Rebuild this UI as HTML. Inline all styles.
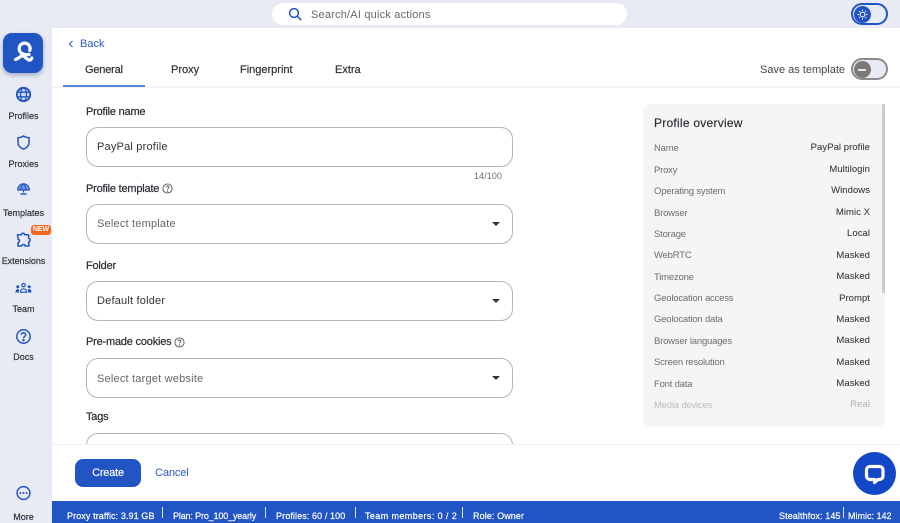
<!DOCTYPE html>
<html><head><meta charset="utf-8">
<style>
html,body{margin:0;padding:0;width:900px;height:523px;overflow:hidden;background:#fff}
body{position:relative;font-family:"Liberation Sans",sans-serif;color:#2b2b33}
.a{position:absolute}
.t{position:absolute;white-space:nowrap;line-height:14px}
.nav{position:absolute;left:0;width:47px;text-align:center;font-size:9px;line-height:12px;color:#33333b;-webkit-text-stroke:.2px #33333b}
.lab{position:absolute;left:86px;font-size:11px;line-height:14px;color:#2b2b33;white-space:nowrap;letter-spacing:-.2px;-webkit-text-stroke:.2px #2b2b33}
.inp{position:absolute;left:86px;width:425px;height:38px;border:1px solid #b5b5b9;border-radius:12px;background:#fff}
.val{position:absolute;left:97px;font-size:11px;line-height:14px;letter-spacing:.2px;white-space:nowrap}
.car{position:absolute;left:492px;width:0;height:0;border-left:4px solid transparent;border-right:4px solid transparent;border-top:4px solid #33333b}
.k{position:absolute;left:654px;font-size:9.5px;line-height:12px;color:#6d6d73;white-space:nowrap;letter-spacing:-.2px;margin-top:1px}
.v{position:absolute;right:30px;font-size:9.5px;line-height:12px;color:#3c3c44;white-space:nowrap;letter-spacing:.05px;-webkit-text-stroke:.1px #3c3c44;margin-top:1px}
.tab{position:absolute;top:63px;font-size:11px;line-height:14px;color:#2f2f37;white-space:nowrap;-webkit-text-stroke:.2px #2f2f37}
.f{position:absolute;top:510px;font-size:9px;line-height:12px;color:#fff;white-space:nowrap;letter-spacing:.1px;-webkit-text-stroke:.2px #fff}
.sep{position:absolute;top:507px;width:1px;height:11px;background:#dfe6f7}
svg{position:absolute;overflow:visible}
</style></head><body>
<div class="a" style="left:0;top:0;width:900px;height:28px;background:#e8ebf4"></div>
<div class="a" style="left:0;top:0;width:52px;height:523px;background:#e8ebf4"></div>

<!-- search -->
<div class="a" style="left:272px;top:3px;width:355px;height:22px;border-radius:11px;background:#fff"></div>
<svg style="left:288px;top:7px" width="15" height="15" viewBox="0 0 15 15" fill="none" stroke="#2255c4" stroke-width="1.5"><circle cx="6" cy="6" r="4.4"/><path d="M9.2 9.2L13.2 13.2"/></svg>
<div class="t" style="left:311px;top:8px;font-size:11px;color:#66666c;letter-spacing:.2px">Search/AI quick actions</div>

<!-- theme toggle -->
<div class="a" style="left:851px;top:3px;width:32.500px;height:18px;border:2px solid #2255c4;border-radius:12px;background:#e8ebf4"></div>
<div class="a" style="left:853.500px;top:5.500px;width:17px;height:17px;border-radius:50%;background:#2255c4"></div>
<svg style="left:853.500px;top:5.500px" width="17" height="17" viewBox="0 0 17 17" fill="none" stroke="#fff" stroke-width="1"><circle cx="8.500" cy="8.500" r="2.400"/><path d="M8.500 3.500v1.400M8.500 12.100v1.400M3.500 8.500h1.400M12.100 8.500h1.400M5 5l.9.9M11.100 11.100l.9.9M12 5l-.9.9M5.900 11.100l-.9.9"/></svg>

<!-- logo -->
<div class="a" style="left:3px;top:33px;width:40px;height:40px;border-radius:9px;background:#2255c4;box-shadow:0 2px 5px rgba(30,50,110,.35)"></div>
<svg style="left:3px;top:33px" width="40" height="40" viewBox="0 0 40 40" fill="none" stroke="#fff" stroke-width="3.200" stroke-linecap="round" stroke-linejoin="round"><path d="M26 21.500c-2 .3-5 0-6.500-.8a5.500 5.500 0 1 1 7.300-3.200"/><path d="M12.500 26.500c2.800-1 4.800-2.800 7-4.300 2.200 1.500 4.200 3.800 6.500 4.800 1.300.5 2.300-.4 2.800-2"/></svg>

<!-- nav icons -->
<svg style="left:16px;top:87px" width="15" height="15" viewBox="0 0 15 15" fill="none" stroke="#2255c4" stroke-width="1.300"><circle cx="7.500" cy="7.500" r="6.700" fill="#cfdaf3" stroke-width="1.800"/><ellipse cx="7.500" cy="7.500" rx="3" ry="6.700"/><path d="M1.200 5.200h12.600M1.200 9.800h12.600"/></svg>
<div class="nav" style="top:110px">Profiles</div>
<svg style="left:17px;top:135px" width="13" height="15" viewBox="0 0 13 15" fill="none" stroke="#2255c4" stroke-width="1.500"><path d="M6.500 1C5 2.100 3 2.600 1 2.700V7.500c0 3 2.200 5.300 5.500 6.700C9.800 12.800 12 10.500 12 7.500V2.700C10 2.600 8 2.100 6.500 1z"/></svg>
<div class="nav" style="top:158px">Proxies</div>
<svg style="left:17px;top:183px" width="13" height="12" viewBox="0 0 13 12" fill="none" stroke="#2255c4" stroke-width="1.200"><path d="M.7 7C.7 3.500 3.200.8 6.500.8s5.800 2.700 5.800 6.200z" fill="#7f9be0"/><path d="M6.500.8c-1.500 1.300-2.300 3.500-2.300 6.200M6.500.8c1.500 1.300 2.300 3.500 2.300 6.200M6.500 7v2.500"/><path d="M3.500 11h6" stroke-width="1.500"/></svg>
<div class="nav" style="top:207px">Templates</div>
<svg style="left:16px;top:232px" width="15" height="15" viewBox="0 0 15 15" fill="none" stroke="#2255c4" stroke-width="1.500" stroke-linejoin="round"><path d="M5.500 2.800C5.500 .8 8.500.6 8.800 2.800H12.600V6.300c1.900.2 1.900 3.400 0 3.600L13 14H9.200c-.3-2-3.200-2-3.500 0H2V10.700c1.900-.3 1.900-3.300 0-3.600L1.500 2.800z"/></svg>
<div class="a" style="left:31px;top:225px;width:20px;height:10px;border-radius:3px;background:#f4671f;color:#fff;font-size:7px;font-weight:bold;line-height:10px;text-align:center">NEW</div>
<div class="nav" style="top:255px;letter-spacing:-.05px">Extensions</div>
<svg style="left:15px;top:283px" width="17" height="10" viewBox="0 0 17 10" fill="#2255c4"><circle cx="8.500" cy="2.200" r="1.700" fill="none" stroke="#2255c4" stroke-width="1.200"/><path d="M5.500 9.300c0-2.300 1.300-3.500 3-3.500s3 1.200 3 3.500z" fill="none" stroke="#2255c4" stroke-width="1.200"/><circle cx="2.800" cy="3.800" r="1.500"/><circle cx="14.200" cy="3.800" r="1.500"/><path d="M.5 9.500c0-2 .8-3.500 2.300-3.500S4 7 4 9.500zM16.500 9.500c0-2-.8-3.500-2.300-3.500S13 7 13 9.500z"/></svg>
<div class="nav" style="top:303px">Team</div>
<svg style="left:16px;top:329px" width="15" height="15" viewBox="0 0 15 15" fill="none" stroke="#2255c4" stroke-width="1.500"><circle cx="7.500" cy="7.500" r="6.700"/><path d="M5.300 5.800C5.300 4.600 6.300 3.800 7.500 3.800s2.200.8 2.200 2c0 1.700-2.200 1.700-2.200 3.400"/><circle cx="7.500" cy="11.200" r=".5" fill="#2255c4"/></svg>
<div class="nav" style="top:351px">Docs</div>
<svg style="left:16px;top:486px" width="15" height="14" viewBox="0 0 15 14" fill="none" stroke="#2255c4" stroke-width="1.500"><circle cx="7.500" cy="7" r="6.400"/><circle cx="4.400" cy="7" r="1" fill="#2255c4" stroke="none"/><circle cx="7.500" cy="7" r="1" fill="#2255c4" stroke="none"/><circle cx="10.600" cy="7" r="1" fill="#2255c4" stroke="none"/></svg>
<div class="nav" style="top:511px">More</div>

<!-- back -->
<svg style="left:68px;top:40px" width="6" height="8" viewBox="0 0 6 8" fill="none" stroke="#3d68cc" stroke-width="1.200"><path d="M4.500 1L1.500 4l3 3"/></svg>
<div class="t" style="left:80px;top:37px;font-size:11px;color:#3d68cc;-webkit-text-stroke:.1px #3d68cc">Back</div>

<!-- tabs -->
<div class="tab" style="left:85px;letter-spacing:-.2px">General</div>
<div class="tab" style="left:171px">Proxy</div>
<div class="tab" style="left:240px">Fingerprint</div>
<div class="tab" style="left:335px">Extra</div>
<div class="a" style="left:52px;top:86px;width:848px;height:2px;background:#f4f4f6"></div>
<div class="a" style="left:63px;top:85px;width:82px;height:2px;background:#5a85dc"></div>

<div class="t" style="left:760px;top:63px;font-size:11px;color:#44444c">Save as template</div>
<div class="a" style="left:851px;top:58px;width:32.500px;height:18px;border:2px solid #8a8a8e;border-radius:12px;background:#e8ebf4"></div>
<div class="a" style="left:853.500px;top:61px;width:17px;height:17px;border-radius:50%;background:#7d7878"></div>
<div class="a" style="left:858px;top:69px;width:8px;height:1.500px;background:#e8e8e8"></div>

<!-- form -->
<div class="lab" style="top:105px">Profile name</div>
<div class="inp" style="top:127px"></div>
<div class="val" style="top:140px;color:#33333b">PayPal profile</div>
<div class="t" style="left:474px;top:169px;font-size:9px;color:#6d6d73;letter-spacing:.1px">14/100</div>

<div class="lab" style="top:182px">Profile template</div>
<svg style="left:162px;top:183px" width="11" height="11" viewBox="0 0 11 11" fill="none" stroke="#55555c" stroke-width=".9"><circle cx="5.500" cy="5.500" r="4.600"/><path d="M4.100 4.300c0-.8.600-1.300 1.400-1.300s1.400.5 1.400 1.200c0 1.100-1.400 1.100-1.400 2.300"/><circle cx="5.500" cy="8" r=".3"/></svg>
<div class="inp" style="top:204px"></div>
<div class="val" style="top:217px;color:#66666c">Select template</div>
<div class="car" style="top:222px"></div>

<div class="lab" style="top:259px">Folder</div>
<div class="inp" style="top:281px"></div>
<div class="val" style="top:294px;color:#33333b">Default folder</div>
<div class="car" style="top:299px"></div>

<div class="lab" style="top:335px">Pre-made cookies</div>
<svg style="left:174px;top:337px" width="11" height="11" viewBox="0 0 11 11" fill="none" stroke="#55555c" stroke-width=".9"><circle cx="5.500" cy="5.500" r="4.600"/><path d="M4.100 4.300c0-.8.600-1.300 1.400-1.300s1.400.5 1.400 1.200c0 1.100-1.400 1.100-1.400 2.300"/><circle cx="5.500" cy="8" r=".3"/></svg>
<div class="inp" style="top:358px"></div>
<div class="val" style="top:372px;color:#66666c">Select target website</div>
<div class="car" style="top:376px"></div>

<div class="lab" style="top:410px">Tags</div>
<div class="inp" style="top:433px"></div>

<!-- overview -->
<div class="a" style="left:643px;top:104px;width:242px;height:323px;border-radius:8px;background:#f5f5f5"></div>
<div class="a" style="left:882px;top:104px;width:3px;height:189px;background:#c9cbd6"></div>
<div class="t" style="left:654px;top:116px;font-size:12px;color:#2b2b33;letter-spacing:.25px;-webkit-text-stroke:.15px #2b2b33">Profile overview</div>
<div class="k" style="top:142px">Name</div><div class="v" style="top:141px">PayPal profile</div>
<div class="k" style="top:164px">Proxy</div><div class="v" style="top:163px">Multilogin</div>
<div class="k" style="top:185px">Operating system</div><div class="v" style="top:184px">Windows</div>
<div class="k" style="top:207px">Browser</div><div class="v" style="top:206px">Mimic X</div>
<div class="k" style="top:228px">Storage</div><div class="v" style="top:227px">Local</div>
<div class="k" style="top:249px">WebRTC</div><div class="v" style="top:249px">Masked</div>
<div class="k" style="top:271px">Timezone</div><div class="v" style="top:270px">Masked</div>
<div class="k" style="top:292px">Geolocation access</div><div class="v" style="top:292px">Prompt</div>
<div class="k" style="top:313px">Geolocation data</div><div class="v" style="top:313px">Masked</div>
<div class="k" style="top:335px">Browser languages</div><div class="v" style="top:334px">Masked</div>
<div class="k" style="top:356px">Screen resolution</div><div class="v" style="top:356px">Masked</div>
<div class="k" style="top:378px">Font data</div><div class="v" style="top:377px">Masked</div>
<div class="k" style="top:399px;color:#bcbcc0">Media devices</div><div class="v" style="top:398px;color:#b0b0b4;-webkit-text-stroke:0">Real</div>

<!-- action bar -->
<div class="a" style="left:52px;top:444px;width:848px;height:57px;background:#fff;border-top:1px solid #f1f1f3;box-sizing:border-box"></div>
<div class="a" style="left:75px;top:459px;width:66px;height:28px;border-radius:8px;background:#2255c4;color:#fff;font-size:11px;line-height:28px;text-align:center;letter-spacing:-.2px;-webkit-text-stroke:.15px #fff">Create</div>
<div class="t" style="left:155px;top:466px;font-size:11px;color:#3d68cc;letter-spacing:-.1px;-webkit-text-stroke:.1px #3d68cc">Cancel</div>

<!-- chat -->
<div class="a" style="left:853px;top:452px;width:43px;height:43px;border-radius:50%;background:#1248c8"></div>
<svg style="left:853px;top:452px" width="43" height="43" viewBox="0 0 43 43" fill="none" stroke="#fff" stroke-width="3.200" stroke-linejoin="round"><path d="M17 14.500h9.500a3.500 3.500 0 0 1 3.500 3.500v6a3.500 3.500 0 0 1-3.500 3.500H25l-3.500 3v-3H17a3.500 3.500 0 0 1-3.500-3.500v-6a3.500 3.500 0 0 1 3.500-3.500z"/></svg>

<!-- footer -->
<div class="a" style="left:52px;top:501px;width:848px;height:22px;background:#2255c4"></div>
<div class="f" style="left:67px">Proxy traffic: 3.91 GB</div>
<div class="sep" style="left:162px"></div>
<div class="f" style="left:173px;letter-spacing:-.15px">Plan: Pro_100_yearly</div>
<div class="sep" style="left:265px"></div>
<div class="f" style="left:276px">Profiles: 60 / 100</div>
<div class="sep" style="left:355px"></div>
<div class="f" style="left:365px;letter-spacing:.4px">Team members: 0 / 2</div>
<div class="sep" style="left:462px"></div>
<div class="f" style="left:473px">Role: Owner</div>
<div class="f" style="left:779px">Stealthfox: 145</div>
<div class="sep" style="left:843px"></div>
<div class="f" style="left:848px;letter-spacing:0">Mimic: 142</div>
</body></html>
